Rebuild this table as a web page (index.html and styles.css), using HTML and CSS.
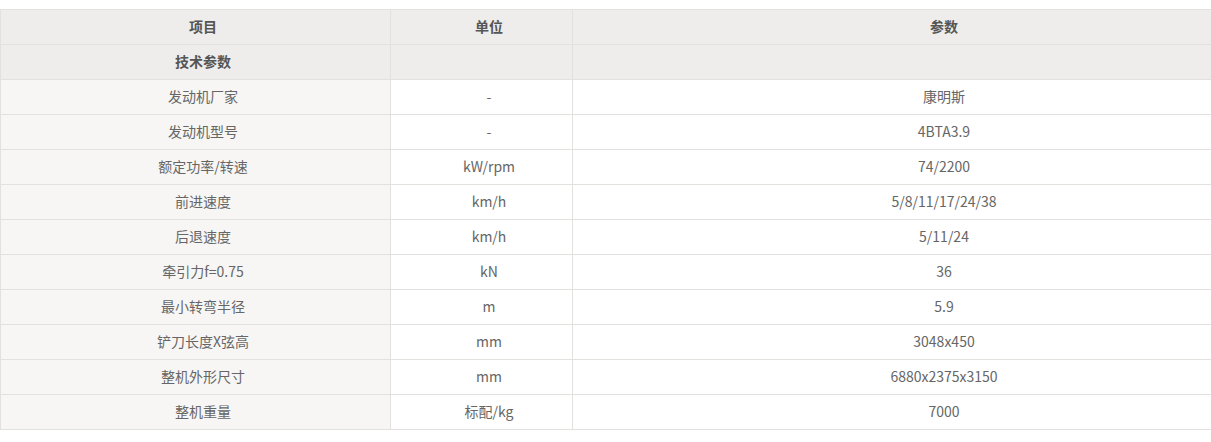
FILE: index.html
```html
<!DOCTYPE html>
<html lang="zh-CN">
<head>
<meta charset="utf-8">
<title>技术参数</title>
<link rel="stylesheet" href="styles.css">
</head>
<body>
<div class="wrap">
<table class="spec">
  <colgroup>
    <col class="c1"><col class="c2"><col class="c3">
  </colgroup>
  <thead>
    <tr class="head"><th>项目</th><th>单位</th><th>参数</th></tr>
  </thead>
  <tbody>
    <tr class="group"><th>技术参数</th><th></th><th></th></tr>
    <tr><td class="name">发动机厂家</td><td>-</td><td>康明斯</td></tr>
    <tr><td class="name">发动机型号</td><td>-</td><td>4BTA3.9</td></tr>
    <tr><td class="name">额定功率/转速</td><td>kW/rpm</td><td>74/2200</td></tr>
    <tr><td class="name">前进速度</td><td>km/h</td><td>5/8/11/17/24/38</td></tr>
    <tr><td class="name">后退速度</td><td>km/h</td><td>5/11/24</td></tr>
    <tr><td class="name">牵引力f=0.75</td><td>kN</td><td>36</td></tr>
    <tr><td class="name">最小转弯半径</td><td>m</td><td>5.9</td></tr>
    <tr><td class="name">铲刀长度X弦高</td><td>mm</td><td>3048x450</td></tr>
    <tr><td class="name">整机外形尺寸</td><td>mm</td><td>6880x2375x3150</td></tr>
    <tr><td class="name">整机重量</td><td>标配/kg</td><td>7000</td></tr>
  </tbody>
</table>
</div>
</body>
</html>
```
FILE: styles.css
```css
html, body {
  margin: 0;
  padding: 0;
  background: #fff;
  overflow: hidden;
}
.wrap {
  padding-top: 9px;
  width: 1211px;
  overflow: hidden;
}
.spec {
  border-collapse: collapse;
  table-layout: fixed;
  width: 1300px;
  font-family: "Microsoft YaHei", "Noto Sans CJK SC", "Noto Sans", sans-serif;
  font-size: 14px;
  color: #666;
}
.c1 { width: 390px; }
.c2 { width: 182px; }
.c3 { width: 728px; }
.spec th, .spec td {
  height: 35px;
  padding: 0 0 2px 15px;
  text-align: center;
  vertical-align: middle;
  border: 1px solid #e2e1de;
  box-sizing: border-box;
  line-height: 20px;
}
.spec th {
  background: #eeedeb;
  color: #555;
  font-weight: bold;
}
.spec td.name {
  background: #f7f6f4;
}
```
